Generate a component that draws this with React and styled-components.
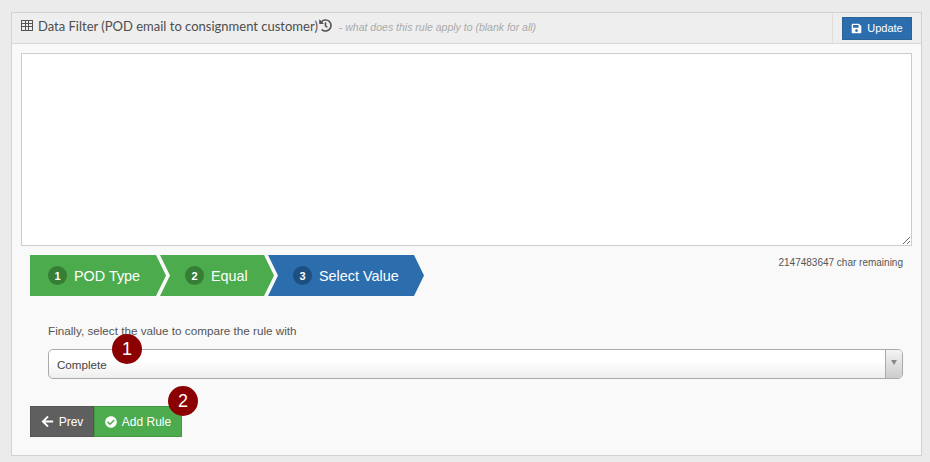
import styled, { createGlobalStyle } from "styled-components";
import { FaArrowLeft, FaCheckCircle, FaHistory, FaSave } from "react-icons/fa";

const steps = [
  { id: 1, label: "POD Type", width: 136, done: true },
  { id: 2, label: "Equal", width: 114, done: true },
  { id: 3, label: "Select Value", width: 156, done: false },
];

function TableIcon() {
  return (
    <svg width="12" height="11" viewBox="0 0 12 11" fill="none" stroke="#555555" strokeWidth="1">
      <rect x="0.5" y="0.5" width="11" height="10" />
      <path d="M0 3.5h12M0 6.5h12M4.5 1v9M7.5 1v9" />
    </svg>
  );
}

export default function App() {
  return (
    <>
      <GlobalStyle />
      <Panel>
        <PanelHeader>
          <Title>
            <TableIcon />
            <TitleText>Data Filter (POD email to consignment customer)</TitleText>
            <FaHistory size={13} />
            <Hint>- what does this rule apply to (blank for all)</Hint>
          </Title>
          <HeaderActions>
            <UpdateButton>
              <FaSave size={11} />
              Update
            </UpdateButton>
          </HeaderActions>
        </PanelHeader>
        <PanelBody>
          <FilterInput readOnly />
          <WizardRow>
            <Wizard>
              {steps.map((step) => (
                <Step key={step.id} $width={step.width} $done={step.done}>
                  <StepNumber $done={step.done}>{step.id}</StepNumber>
                  {step.label}
                </Step>
              ))}
            </Wizard>
            <CharCount>2147483647 char remaining</CharCount>
          </WizardRow>
          <Field>
            <FieldLabel>Finally, select the value to compare the rule with</FieldLabel>
            <SelectWrap>
              <SelectBox>
                <SelectValue>Complete</SelectValue>
                <SelectArrow>
                  <ArrowGlyph />
                </SelectArrow>
              </SelectBox>
              <Callout $left={64} $top={-15}>1</Callout>
            </SelectWrap>
          </Field>
          <Actions>
            <ActionButton $bg="#5f5f5f" $border="#555555" $width={64}>
              <FaArrowLeft size={13} />
              Prev
            </ActionButton>
            <ActionButton $bg="#4cab4c" $border="#419a41" $width={88}>
              <FaCheckCircle size={12} />
              Add Rule
            </ActionButton>
            <Callout $left={138} $top={-20}>2</Callout>
          </Actions>
        </PanelBody>
      </Panel>
    </>
  );
}

const GlobalStyle = createGlobalStyle`
  html, body {
    margin: 0;
    background: #ebebeb;
    font-family: "Liberation Sans", Arial, sans-serif;
  }
`;

const Panel = styled.div`
  box-sizing: border-box;
  width: 911px;
  height: 444px;
  margin: 12px 0 0 11px;
  border: 1px solid #d2d2d2;
  background: #f9f9f9;
`;

const PanelHeader = styled.div`
  box-sizing: border-box;
  display: flex;
  justify-content: space-between;
  height: 31px;
  padding-left: 9px;
  background: #eeeeee;
  border-bottom: 1px solid #d8d8d8;
`;

const Title = styled.div`
  display: flex;
  align-items: center;
  padding-bottom: 5px;
  color: #555555;
`;

const TitleText = styled.span`
  margin: 0 1px 0 5px;
  font-family: Lato, sans-serif;
  font-size: 13px;
  color: #4d4d4d;
`;

const Hint = styled.span`
  margin: 3px 0 0 7px;
  font-size: 10.5px;
  font-style: italic;
  color: #aaaaaa;
`;

const HeaderActions = styled.div`
  box-sizing: border-box;
  display: flex;
  align-items: center;
  width: 89px;
  padding: 0 9px;
  border-left: 1px solid #dddddd;
`;

const UpdateButton = styled.button`
  box-sizing: border-box;
  display: flex;
  align-items: center;
  justify-content: center;
  gap: 5px;
  width: 70px;
  height: 23px;
  padding: 0;
  border: 1px solid #2a6496;
  background: #2b6dad;
  color: #ffffff;
  font-family: inherit;
  font-size: 11px;
`;

const PanelBody = styled.div`
  padding: 9px;
`;

const FilterInput = styled.textarea`
  box-sizing: border-box;
  display: block;
  width: 891px;
  height: 193px;
  margin: 0;
  border: 1px solid #cccccc;
  background: #ffffff;
  outline: none;
`;

const WizardRow = styled.div`
  display: flex;
  justify-content: space-between;
  align-items: flex-start;
  padding: 9px 9px 0;
`;

const Wizard = styled.div`
  display: flex;
`;

const Step = styled.div`
  box-sizing: border-box;
  display: flex;
  align-items: center;
  gap: 7px;
  width: ${(p) => p.$width}px;
  height: 41px;
  margin-left: -6px;
  padding-left: 25px;
  background: ${(p) => (p.$done ? "#4cab4c" : "#2b6dad")};
  color: #ffffff;
  font-size: 14.4px;
  clip-path: polygon(
    0 0,
    calc(100% - 10px) 0,
    100% 50%,
    calc(100% - 10px) 100%,
    0 100%,
    10px 50%
  );

  &:first-child {
    margin-left: 0;
    padding-left: 18px;
    clip-path: polygon(0 0, calc(100% - 10px) 0, 100% 50%, calc(100% - 10px) 100%, 0 100%);
  }
`;

const StepNumber = styled.span`
  display: flex;
  align-items: center;
  justify-content: center;
  width: 19px;
  height: 19px;
  border-radius: 50%;
  background: ${(p) => (p.$done ? "#367e36" : "#1d4f80")};
  font-size: 11px;
  font-weight: bold;
`;

const CharCount = styled.div`
  margin-top: 2px;
  font-size: 10px;
  color: #555555;
`;

const Field = styled.div`
  margin: 28px 9px 0 27px;
`;

const FieldLabel = styled.div`
  height: 25px;
  font-size: 11.7px;
  line-height: 14px;
  color: #555555;
`;

const SelectWrap = styled.div`
  position: relative;
`;

const SelectBox = styled.div`
  box-sizing: border-box;
  display: flex;
  height: 30px;
  border: 1px solid #aaaaaa;
  border-radius: 5px;
  background: linear-gradient(#ffffff 40%, #eeeeee);
  overflow: hidden;
`;

const SelectValue = styled.div`
  flex: 1;
  padding-left: 8px;
  font-size: 11.6px;
  line-height: 30px;
  color: #444444;
`;

const SelectArrow = styled.div`
  display: flex;
  align-items: center;
  justify-content: center;
  width: 16px;
  border-left: 1px solid #aaaaaa;
  background: linear-gradient(#f4f4f4, #cccccc);
`;

const ArrowGlyph = styled.span`
  width: 0;
  height: 0;
  margin-bottom: 4px;
  border-left: 3px solid transparent;
  border-right: 3px solid transparent;
  border-top: 5px solid #888888;
`;

const Actions = styled.div`
  position: relative;
  display: flex;
  margin: 27px 0 0 9px;
`;

const ActionButton = styled.button`
  box-sizing: border-box;
  display: flex;
  align-items: center;
  justify-content: center;
  gap: 5px;
  width: ${(p) => p.$width}px;
  height: 31px;
  padding: 0;
  border: 1px solid ${(p) => p.$border};
  background: ${(p) => p.$bg};
  color: #ffffff;
  font-family: inherit;
  font-size: 12px;
`;

const Callout = styled.span`
  position: absolute;
  left: ${(p) => p.$left}px;
  top: ${(p) => p.$top}px;
  display: flex;
  align-items: center;
  justify-content: center;
  width: 30px;
  height: 30px;
  border-radius: 50%;
  background: #8b0000;
  color: #ffffff;
  font-size: 18px;
`;
